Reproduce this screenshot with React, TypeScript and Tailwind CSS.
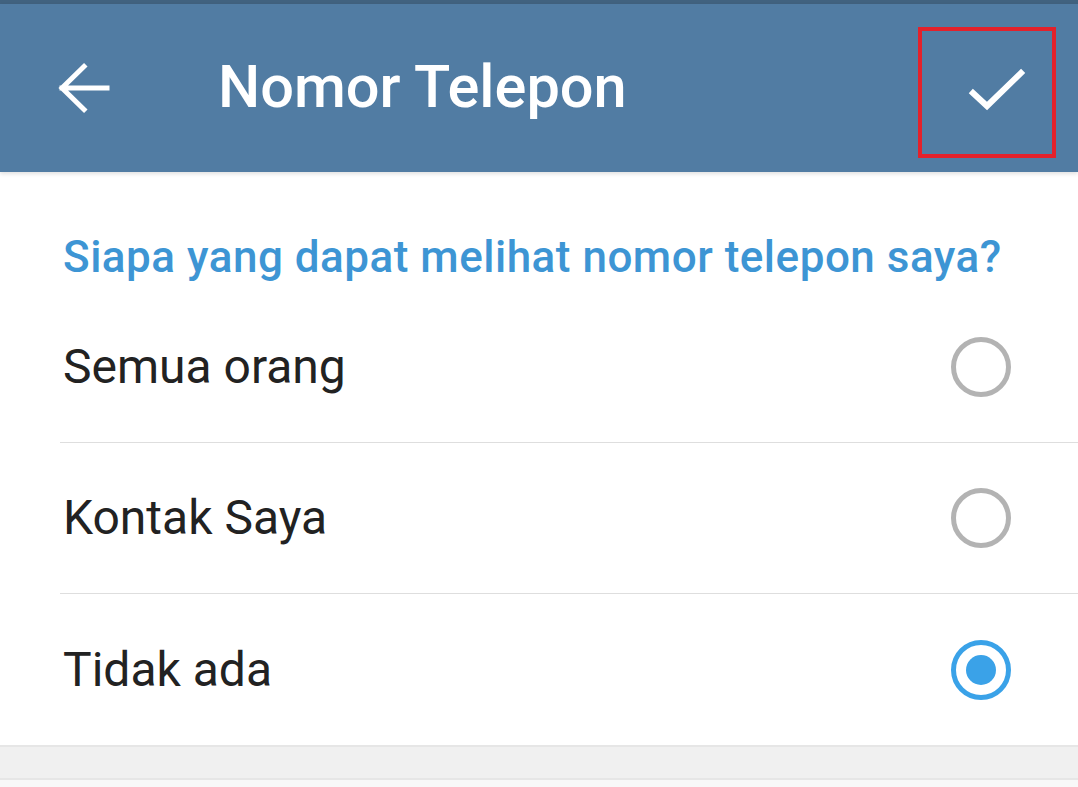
import React from "react";

type Option = { label: string; checked: boolean };

const options: Option[] = [
  { label: "Semua orang", checked: false },
  { label: "Kontak Saya", checked: false },
  { label: "Tidak ada", checked: true },
];

function BackArrow() {
  return (
    <svg width="52" height="52" viewBox="0 0 52 52" fill="none">
      <path
        d="M49 26 H4 M26 4.5 L4 26 L26 47.5"
        stroke="white"
        strokeWidth="5"
        strokeLinecap="square"
        strokeLinejoin="miter"
      />
    </svg>
  );
}

function CheckMark() {
  return (
    <svg width="64" height="48" viewBox="0 0 64 48" fill="none">
      <path
        d="M11 29 L25 42 L59 9"
        stroke="white"
        strokeWidth="6"
        strokeLinecap="square"
      />
    </svg>
  );
}

function Radio({ checked }: { checked: boolean }) {
  if (checked) {
    return (
      <div className="flex h-[60px] w-[60px] items-center justify-center rounded-full border-[5px] border-[#3aa2e8]">
        <div className="h-[30px] w-[30px] rounded-full bg-[#3aa2e8]" />
      </div>
    );
  }
  return <div className="h-[60px] w-[60px] rounded-full border-[5px] border-[#b3b3b3]" />;
}

export default function App() {
  return (
    <div
      className="flex h-[787px] w-[1078px] flex-col overflow-hidden bg-white"
      style={{ fontFamily: "Roboto, 'Noto Sans', sans-serif" }}
    >
      {/* status strip + toolbar */}
      <div className="h-[4px] bg-[#41627f]" />
      <header className="relative z-10 flex h-[168px] items-center bg-[#517ca3] pl-[58px] pr-[52px] shadow-[0_2px_4px_rgba(0,0,0,0.12)]">
        <BackArrow />
        <h1 className="ml-[108px] flex-1 text-[59.5px] font-medium leading-none text-white">
          Nomor Telepon
        </h1>
        <div className="relative flex h-[60px] w-[64px] items-center justify-center">
          <CheckMark />
          <div className="pointer-events-none absolute left-[-44px] top-[-31px] h-[131px] w-[138px] border-[4px] border-[#e3212b]" />
        </div>
      </header>

      {/* privacy choices */}
      <section className="flex flex-col bg-white">
        <div className="flex h-[120px] items-end pb-[10px] pl-[63px]">
          <p className="whitespace-nowrap text-[44px] font-medium leading-[50px] tracking-[0.5px] text-[#3d95d4]">
            Siapa yang dapat melihat nomor telepon saya?
          </p>
        </div>
        {options.map((o, i) => (
          <div
            key={o.label}
            className={`ml-[60px] flex h-[151px] items-center justify-between pr-[67px] ${
              i < options.length - 1 ? "border-b border-[#dedede]" : ""
            }`}
          >
            <span className="pl-[3px] text-[48px] leading-none text-[#222222]">{o.label}</span>
            <Radio checked={o.checked} />
          </div>
        ))}
      </section>

      <div className="h-[35px] border-y-2 border-[#e6e6e6] bg-[#f0f0f0]" />
      <div className="flex-1 bg-[#f8f8f8]" />
    </div>
  );
}
